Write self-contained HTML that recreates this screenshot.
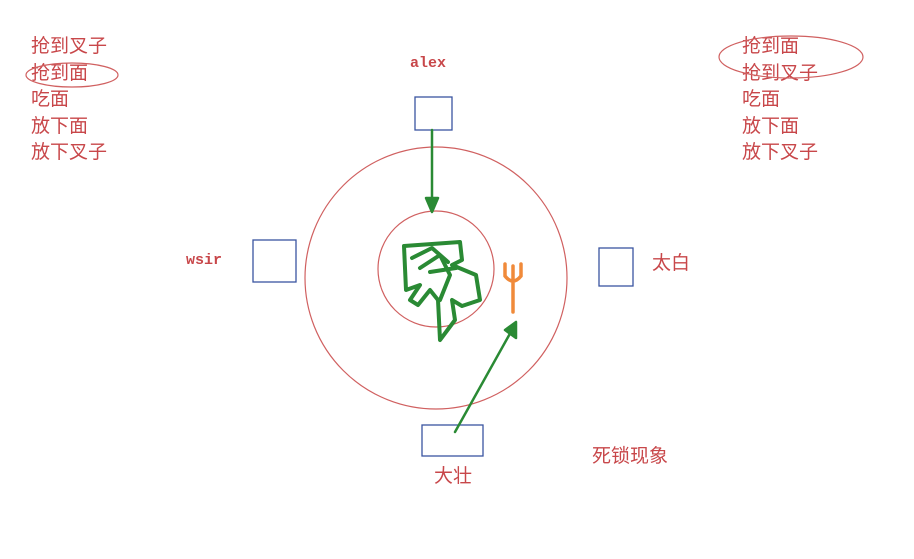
<!DOCTYPE html><html><head><style>
body{margin:0;width:914px;height:559px;background:#fff;position:relative;overflow:hidden;font-family:"Liberation Sans","Noto Sans CJK SC",sans-serif;color:#c8474a}
.t{position:absolute;font-size:19px;line-height:26.5px;white-space:pre}
.m{position:absolute;font-family:"Liberation Mono",monospace;font-weight:bold;font-size:15px;color:#c8474a}
</style></head><body>
<div class="t" style="left:31px;top:34px">抢到叉子
抢到面
吃面
放下面
放下叉子</div>
<div class="t" style="left:742px;top:34px">抢到面
抢到叉子
吃面
放下面
放下叉子</div>
<div class="m" style="left:410px;top:55px">alex</div>
<div class="m" style="left:186px;top:252px">wsir</div>
<div class="t" style="left:652px;top:251px">太白</div>
<div class="t" style="left:434px;top:464px">大壮</div>
<div class="t" style="left:592px;top:444px">死锁现象</div>
<svg width="914" height="559" style="position:absolute;left:0;top:0">
<g fill="none" stroke="#d06060" stroke-width="1.2">
<ellipse cx="72" cy="75" rx="46" ry="12"/>
<ellipse cx="791" cy="57" rx="72" ry="21"/>
<circle cx="436" cy="278" r="131"/>
<circle cx="436" cy="269" r="58"/>
</g>
<g fill="none" stroke="#3a55a0" stroke-width="1.3">
<rect x="415" y="97" width="37" height="33"/>
<rect x="253" y="240" width="43" height="42"/>
<rect x="599" y="248" width="34" height="38"/>
<rect x="422" y="425" width="61" height="31"/>
</g>
<g stroke="#2a8a34" stroke-width="2.5" fill="none" stroke-linecap="round" stroke-linejoin="round">
<line x1="432" y1="130" x2="432" y2="202"/>
<path d="M426 198 L432 212 L438 198 Z" fill="#2a8a34"/>
<line x1="455" y1="432" x2="512" y2="330"/>
<path d="M505 330 L516 322 L516 338 Z" fill="#2a8a34"/>
</g>
<g stroke="#2a8a34" stroke-width="4" fill="none" stroke-linecap="round" stroke-linejoin="round">
<path d="M404 246 L460 242 L462 260 L452 265 L476 275 L480 300 L462 306 L452 300 L455 320 L440 340 L438 300 L430 290 L418 305 L410 300 L420 285 L406 290 L404 246 M420 268 L440 255 L450 275 L440 300 M412 258 L432 248 L448 262 M430 272 L456 268"/>
</g>
<g stroke="#f08a3a" stroke-width="3.5" fill="none" stroke-linecap="round">
<path d="M505 264 L505 276 Q513 286 521 276 L521 264 M513 266 L513 312"/>
</g>
</svg>
</body></html>
